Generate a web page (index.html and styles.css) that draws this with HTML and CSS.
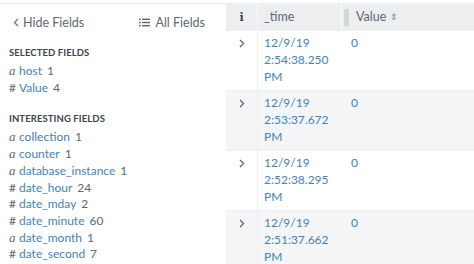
FILE: index.html
```html
<!DOCTYPE html>
<html>
<head>
<meta charset="utf-8">
<link rel="stylesheet" href="styles.css">
</head>
<body>
<div class="page">
  <aside class="sidebar">
    <div class="side-top">
      <span class="hide"><svg class="chev-l" width="6" height="9" viewBox="0 0 6 9"><path d="M5 1 L1.5 4.5 L5 8" fill="none" stroke="#6b7680" stroke-width="1.3"/></svg>Hide Fields</span>
      <span class="all"><svg class="list-ic" width="11" height="9" viewBox="0 0 11 9"><rect x="0" y="0.5" width="1.6" height="1.6" fill="#5c6773"/><rect x="0" y="3.7" width="1.6" height="1.6" fill="#5c6773"/><rect x="0" y="6.9" width="1.6" height="1.6" fill="#5c6773"/><rect x="3" y="0.6" width="8" height="1.4" fill="#5c6773"/><rect x="3" y="3.8" width="8" height="1.4" fill="#5c6773"/><rect x="3" y="7" width="8" height="1.4" fill="#5c6773"/></svg>All Fields</span>
    </div>
    <div class="section">
      <h4>SELECTED FIELDS</h4>
      <div class="field"><span class="t a">a</span><span class="n">host</span><span class="c">1</span></div>
      <div class="field"><span class="t">#</span><span class="n">Value</span><span class="c">4</span></div>
    </div>
    <div class="section">
      <h4>INTERESTING FIELDS</h4>
      <div class="field"><span class="t a">a</span><span class="n">collection</span><span class="c">1</span></div>
      <div class="field"><span class="t a">a</span><span class="n">counter</span><span class="c">1</span></div>
      <div class="field"><span class="t a">a</span><span class="n">database_instance</span><span class="c">1</span></div>
      <div class="field"><span class="t">#</span><span class="n">date_hour</span><span class="c">24</span></div>
      <div class="field"><span class="t">#</span><span class="n">date_mday</span><span class="c">2</span></div>
      <div class="field"><span class="t">#</span><span class="n">date_minute</span><span class="c">60</span></div>
      <div class="field"><span class="t a">a</span><span class="n">date_month</span><span class="c">1</span></div>
      <div class="field"><span class="t">#</span><span class="n">date_second</span><span class="c">7</span></div>
    </div>
  </aside>
  <section class="table">
    <div class="row head">
      <div class="col-i"><span class="info">i</span></div>
      <div class="col-t">_time</div>
      <div class="col-v"><span class="handle"></span>Value <span class="sort">&#8661;</span></div>
    </div>
    <div class="row">
      <div class="col-i"><svg width="6" height="9" viewBox="0 0 6 9"><path d="M1 1 L4.5 4.5 L1 8" fill="none" stroke="#5c6773" stroke-width="1.3"/></svg></div>
      <div class="col-t">12/9/19<br>2:54:38.250<br>PM</div>
      <div class="col-v">0</div>
    </div>
    <div class="row alt">
      <div class="col-i"><svg width="6" height="9" viewBox="0 0 6 9"><path d="M1 1 L4.5 4.5 L1 8" fill="none" stroke="#5c6773" stroke-width="1.3"/></svg></div>
      <div class="col-t">12/9/19<br>2:53:37.672<br>PM</div>
      <div class="col-v">0</div>
    </div>
    <div class="row">
      <div class="col-i"><svg width="6" height="9" viewBox="0 0 6 9"><path d="M1 1 L4.5 4.5 L1 8" fill="none" stroke="#5c6773" stroke-width="1.3"/></svg></div>
      <div class="col-t">12/9/19<br>2:52:38.295<br>PM</div>
      <div class="col-v">0</div>
    </div>
    <div class="row alt">
      <div class="col-i"><svg width="6" height="9" viewBox="0 0 6 9"><path d="M1 1 L4.5 4.5 L1 8" fill="none" stroke="#5c6773" stroke-width="1.3"/></svg></div>
      <div class="col-t">12/9/19<br>2:51:37.662<br>PM</div>
      <div class="col-v">0</div>
    </div>
  </section>
</div>
</body>
</html>
```
FILE: styles.css
```css
* { box-sizing: border-box; }
html, body { margin: 0; padding: 0; background: #fff; overflow: hidden; }
body { font-family: Lato, "Liberation Sans", sans-serif; font-size: 12px; color: #5c6773; }
.page { display: flex; padding-top: 3px; height: 264px; }
.sidebar { width: 226px; flex: none; border-top: 1px solid #e4e7ea; padding: 0 9px; }
.side-top { display: flex; justify-content: space-between; align-items: center; height: 36px; padding: 0 12px 0 4px; font-size: 12.5px; margin-bottom: 6px; }
.hide { display: flex; align-items: center; gap: 4px; color: #5c6773; }
.all { display: flex; align-items: center; gap: 5px; color: #5c6773; }
.section { margin-bottom: 16px; }
.section h4 { margin: 0 0 4px; font-size: 9.5px; font-weight: 700; color: #3c444d; letter-spacing: 0.1px; line-height: 13px; }
.field { line-height: 16.7px; white-space: nowrap; font-size: 12px; }
.field .t { display: inline-block; width: 10px; color: #5c6773; }
.field .t.a { font-family: "Liberation Serif", serif; font-style: italic; font-size: 13px; }
.field .n { color: #4682b4; margin-right: 5px; }
.field .c { color: #5c6773; }
.table { flex: 1; display: flex; flex-direction: column; }
.row { display: flex; background: #fff; border-bottom: 1px solid #eef0f2; }
.row.alt { background: #f4f5f6; }
.row .col-i { width: 31px; flex: none; display: flex; justify-content: center; padding-top: 8px; }
.row .col-t { width: 84px; flex: none; padding: 3px 0 5px 6px; line-height: 17px; color: #4682b4; font-size: 12px; border-left: 1px solid #eef0f2; }
.row .col-v { flex: 1; padding: 3px 0 5px 10px; line-height: 17px; color: #4682b4; font-size: 12px; }
.row.head { background: #eceef0; height: 28px; align-items: center; border-bottom: none; }
.head .col-i { padding-top: 0; }
.head .col-t, .head .col-v { padding: 0 0 0 6px; line-height: 28px; color: #5c6773; border-left: 1px solid #f8f9fa; font-size: 12.5px; }
.head .col-v { display: flex; align-items: center; padding-left: 2px; }
.info { font-family: "DejaVu Serif", serif; font-weight: 700; font-size: 11px; color: #3c444d; }
.handle { display: inline-block; width: 5px; height: 17px; background: #d4d7da; margin-right: 7px; }
.sort { font-size: 9px; margin-left: 4px; color: #7b858f; }
```
